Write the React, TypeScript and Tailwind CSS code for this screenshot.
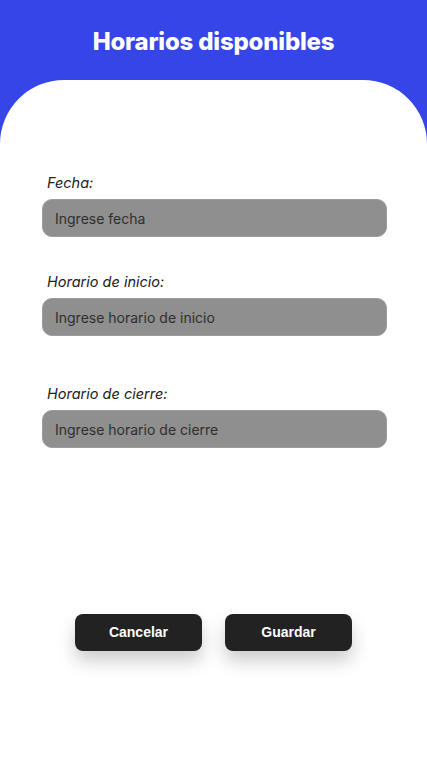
import { useState } from 'react';

function Field({ label, placeholder, className = '' }: { label: string; placeholder: string; className?: string }) {
  const [value, setValue] = useState('');
  return (
    <div className={`flex flex-col ${className}`}>
      <label className="pl-[5px] text-[14.5px] leading-[18px] italic text-[#222]">{label}</label>
      <input
        value={value}
        onChange={e => setValue(e.target.value)}
        placeholder={placeholder}
        className="mt-[7px] h-[38px] w-full rounded-[10px] border border-[#9c9c9c] bg-[#8f8f8f] px-[12px] text-[14px] text-[#2a2a2a] placeholder:text-[#2e2e2e] outline-none"
      />
    </div>
  );
}

function App() {
  return (
    <div className="flex h-screen flex-col bg-[#3645e7] font-['Inter',sans-serif]">
      <header className="flex h-[80px] shrink-0 items-start justify-center pt-[27px]">
        <h1 className="text-[24px] font-extrabold leading-[30px] tracking-[-0.2px] text-white">Horarios disponibles</h1>
      </header>

      <main className="flex flex-1 flex-col rounded-t-[64px] bg-white pl-[42px] pr-[40px] pt-[94px]">
        <Field label="Fecha:" placeholder="Ingrese fecha" />
        <Field label="Horario de inicio:" placeholder="Ingrese horario de inicio" className="mt-[36px]" />
        <Field label="Horario de cierre:" placeholder="Ingrese horario de cierre" className="mt-[49px]" />

        <div className="mt-[166px] flex justify-center gap-[23px] pr-[2px]">
          <button className="h-[37px] w-[127px] rounded-[8px] bg-[#222] font-['Liberation_Sans',sans-serif] text-[14px] font-bold text-white shadow-[0_10px_18px_rgba(0,0,0,0.2)]">
            Cancelar
          </button>
          <button className="h-[37px] w-[127px] rounded-[8px] bg-[#222] font-['Liberation_Sans',sans-serif] text-[14px] font-bold text-white shadow-[0_10px_18px_rgba(0,0,0,0.2)]">
            Guardar
          </button>
        </div>
      </main>
    </div>
  );
}

export default App;
